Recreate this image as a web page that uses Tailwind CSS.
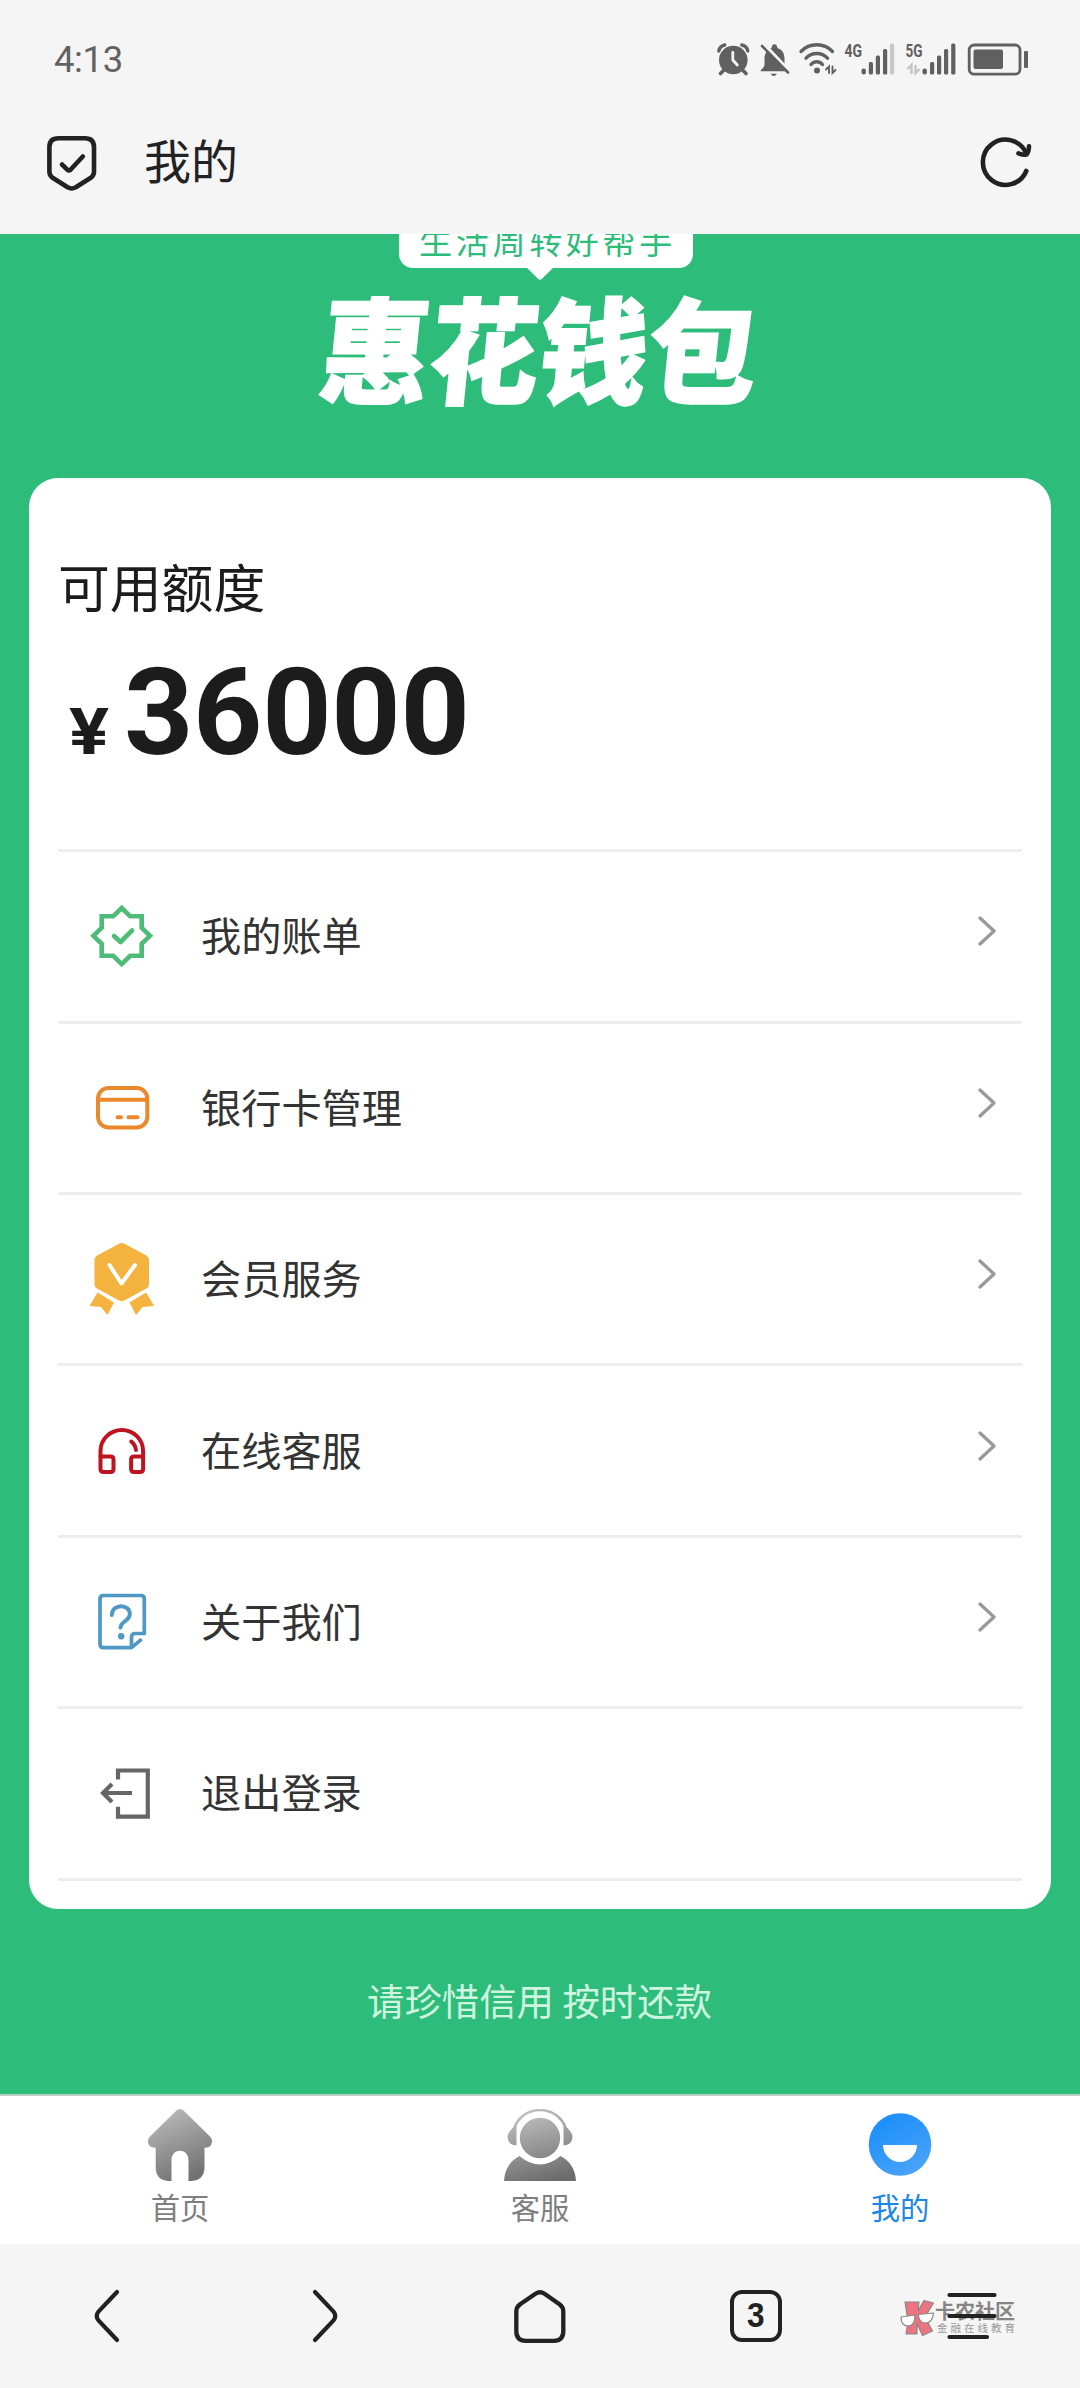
<!DOCTYPE html>
<html lang="zh-CN">
<head>
<meta charset="utf-8">
<title>我的</title>
<script src="https://cdn.jsdelivr.net/npm/@tailwindcss/browser@4"></script>
</head>
<body class="w-[1080px] h-[2388px] overflow-hidden bg-[#f5f5f5] font-['Noto_Sans_CJK_SC',sans-serif] flex flex-col">

<!-- status bar -->
<div class="h-[84px] shrink-0 flex items-start justify-between pl-[54px] pr-[52px] pt-[40px]">
  <div class="font-['Roboto',sans-serif] text-[36.500px] leading-[39px] tracking-[-0.400px] text-[#626262]">4:13</div>
  <div class="flex">
    <svg class="w-[36px] h-[40px]" viewBox="715 40 36 40" fill="none" stroke="#606060">
      <circle cx="733.3" cy="60" r="14.3" fill="#606060" stroke="none"/>
      <path d="M718.8 51q1-5 6-6M747.800 51q-1-5-6-6" stroke-width="3.4" stroke-linecap="round"/>
      <path d="M724 70l-3.500 3.500M742.500 70l3.500 3.500" stroke-width="3.600" stroke-linecap="round"/>
      <path d="M732.800 52.500v7.500l4.500 5" stroke="#f5f5f5" stroke-width="2.800" stroke-linecap="round"/>
    </svg>
    <svg class="ml-[7px] w-[34px] h-[40px]" viewBox="758 40 34 40">
      <path d="M760.500 71.300c0-2.200 4-3.300 4-7v-5.500c0-5.500 3-9.500 7-10.500.2-5.500 5.800-5.500 6 0 4.500 1 7 5 7 10.500v5.500c0 3.700 4 4.800 4 7z" fill="#606060"/>
      <path d="M770.500 73.800h6.500q-3.200 4.600-6.500 0z" fill="#606060"/>
      <path d="M765 46l25 26.500" stroke="#f5f5f5" stroke-width="4.500"/>
      <path d="M762 46l26 26.500" stroke="#606060" stroke-width="2.600" stroke-linecap="round"/>
    </svg>
    <svg class="ml-[6px] w-[40px] h-[40px]" viewBox="798 40 40 40" fill="none" stroke="#606060" stroke-width="3.300" stroke-linecap="round">
      <path d="M801 51.500c8.500-9 23-9 31.500 0M806 58.200c6-6.300 15.500-6.300 21.500 0M811 64.500c3.300-3.700 8.200-3.700 11.500 0"/>
      <circle cx="817" cy="70.600" r="3" fill="#606060" stroke="none"/>
      <path d="M826 69.500l3-3v6.500M835.500 70l-3 3v-6.500" stroke-width="1.900"/>
    </svg>
    <svg class="ml-[5px] w-[53px] h-[40px]" viewBox="843 40 53 40" fill="#606060">
      <text x="844.500" y="57" font-family="Roboto" font-weight="700" font-size="19" textLength="17.500" lengthAdjust="spacingAndGlyphs">4G</text>
      <rect x="861.500" y="68.500" width="4.400" height="6" rx="2"/><rect x="868.800" y="62" width="4.200" height="12.500" rx="1.500"/>
      <rect x="875.800" y="55.500" width="4.200" height="19" rx="1.500"/><rect x="883" y="49" width="4.200" height="25.500" rx="1.500"/>
      <rect x="890" y="43.500" width="4.200" height="31" rx="1.500" fill="#c8c8c8"/>
    </svg>
    <svg class="ml-[9px] w-[52px] h-[40px]" viewBox="905 40 52 40" fill="#606060">
      <text x="905.500" y="57" font-family="Roboto" font-weight="700" font-size="19" textLength="17" lengthAdjust="spacingAndGlyphs">5G</text>
      <path d="M907.500 69l4-4v9M919.500 69l-4 4v-8" fill="none" stroke="#c4c4c4" stroke-width="2.400"/>
      <rect x="922.500" y="68.500" width="4.400" height="6" rx="2"/><rect x="930" y="62" width="4.200" height="12.500" rx="1.500"/>
      <rect x="937" y="55.500" width="4.200" height="19" rx="1.500"/><rect x="944" y="49" width="4.200" height="25.500" rx="1.500"/>
      <rect x="951.200" y="43.500" width="4.200" height="31" rx="1.500"/>
    </svg>
    <svg class="ml-[9px] w-[62px] h-[40px]" viewBox="966 40 62 40" fill="#606060">
      <rect x="969.200" y="45" width="50.800" height="29.200" rx="5" fill="none" stroke="#606060" stroke-width="2.800"/>
      <rect x="973.500" y="49.500" width="29.500" height="19.500" rx="2"/><rect x="1024" y="51" width="4" height="17" rx="1"/>
    </svg>
  </div>
</div>

<!-- title bar -->
<header class="h-[150px] shrink-0 flex items-start pl-[44px] pr-[42px] pt-[46px]">
  <svg class="w-[56px] h-[66px]" viewBox="44 130 56 66" fill="none" stroke="#222" stroke-linecap="round" stroke-linejoin="round">
    <path d="M58.500 138.300h26.500q9 0 9 9v24.500q0 3.800-3.200 6l-15 9.500q-4.200 2.300-8.200 0l-15-9.500q-3.200-2.200-3.200-6v-24.500q0-9 9.100-9z" stroke-width="4.600"/>
    <path d="M62 164.500l5.500 5.300q1.500 1 3 0l12.300-13.300" stroke-width="4.600"/>
  </svg>
  <h1 class="ml-[44px] -mt-[5px] text-[47px] leading-[68px] text-[#222]">我的</h1>
  <svg class="ml-auto w-[60px] h-[60px]" viewBox="978 130 60 60" fill="none" stroke="#222" stroke-width="4.600" stroke-linecap="round" stroke-linejoin="round">
    <path d="M1026.300 171a22.600 22.600 0 1 1 0-17.500"/>
    <path d="M1018.500 153.300q5 1.800 8 1.300 2.200-2.500 2.500-8.300"/>
  </svg>
</header>

<!-- page content -->
<main class="h-[1860px] shrink-0 bg-[#2dbc7a] overflow-hidden flex flex-col items-center">
  <div class="relative -mt-[30px] ml-[12px] w-[294px] h-[64px] bg-white rounded-[14px] flex justify-center pt-[17px]">
    <span class="whitespace-nowrap pl-[3px] text-[33px] leading-[38px] tracking-[3.700px] text-[#2dbc7a]">生活周转好帮手</span>
    <svg class="absolute left-[127px] top-[63px] w-[28px] h-[14px]" viewBox="0 0 28 14"><path d="M0 0h28L16 11.800q-2 2-4 0z" fill="#fff"/></svg>
  </div>
  <div class="mt-[14px] h-[128px] flex items-center">
    <span class="-skew-x-6 scale-y-105 whitespace-nowrap text-[109px] leading-[128px] font-black text-white [-webkit-text-stroke:2px_white]">惠花钱包</span>
  </div>

  <section class="mt-[68px] w-[1022px] h-[1431px] shrink-0 rounded-[29px] bg-white px-[29px]">
    <div class="h-[374.300px] border-b-[3px] border-[#ededed] pt-[70px]">
      <div class="text-[51.800px] leading-[76px] text-[#1c1c1c]">可用额度</div>
      <div class="mt-[29px] flex items-baseline font-['Roboto',sans-serif] font-bold text-[#1c1c1c] leading-[120px]">
        <span class="ml-[11px] w-[55px] text-[65px]"><span class="inline-block origin-left scale-x-115">¥</span></span>
        <span class="text-[121px] tracking-[-0.300px]">36000</span>
      </div>
    </div>

    <div class="h-[171.400px] border-b-[3px] border-[#ededed] flex items-center text-[40.200px] text-[#333]">
      <svg class="ml-[24px] w-[80px] h-[80px]" viewBox="82 897 80 80" fill="none" stroke="#4fbb78" stroke-width="4.600" stroke-linecap="round">
        <path d="M121.700 909l8.500 8.300h11.500v11.500l8.300 8-8.300 8v12h-11.500l-8.500 8.300-8.500-8.300h-11.500v-12l-8.300-8 8.300-8v-11.500h11.500z"/>
        <path d="M114 937l6.500 6 11.500-11.500" stroke-linejoin="round"/>
      </svg>
      <span class="ml-[39px] mb-[4px]">我的账单</span>
      <svg class="ml-auto mr-[26px] mb-[10px] w-[18px] h-[30px]" viewBox="0 0 18 30" fill="none" stroke="#999" stroke-width="3.300"><path d="M2 2l14 13-14 13" stroke-linejoin="round" stroke-linecap="round"/></svg>
    </div>

    <div class="h-[171.400px] border-b-[3px] border-[#ededed] flex items-center text-[40.200px] text-[#333]">
      <svg class="ml-[24px] w-[80px] h-[80px]" viewBox="82 1068 80 80" fill="none" stroke="#ec872b" stroke-width="4" stroke-linecap="round">
        <rect x="98" y="1088" width="49.300" height="39.500" rx="10.500"/><path d="M98 1099.800h49.300M117.500 1117.200h3.500M128.500 1117.200h9"/>
      </svg>
      <span class="ml-[39px] mb-[4px]">银行卡管理</span>
      <svg class="ml-auto mr-[26px] mb-[10px] w-[18px] h-[30px]" viewBox="0 0 18 30" fill="none" stroke="#999" stroke-width="3.300"><path d="M2 2l14 13-14 13" stroke-linejoin="round" stroke-linecap="round"/></svg>
    </div>

    <div class="h-[171.400px] border-b-[3px] border-[#ededed] flex items-center text-[40.200px] text-[#333]">
      <svg class="ml-[24px] w-[80px] h-[80px]" viewBox="82 1239 80 80" fill="#f4b33f">
        <path d="M119 1243.700q2.700-1.500 5.400 0l22 11.800q2.600 1.500 2.600 4.500v24q0 3-2.600 4.500l-22 12q-2.700 1.500-5.400 0l-22-12q-2.500-1.500-2.500-4.500v-24q0-3 2.500-4.500z"/>
        <path d="M97.500 1292.500l16.500 10-6.500 12.500-6.500-8-11.500-1zM146 1292.500l-16.500 10 6.500 12.500 6.500-8 11.700-1z"/>
        <path d="M109.500 1265l12 18.500 13.500-18.500" fill="none" stroke="#fff" stroke-width="4" stroke-linecap="round" stroke-linejoin="round"/>
      </svg>
      <span class="ml-[39px] mb-[4px]">会员服务</span>
      <svg class="ml-auto mr-[26px] mb-[10px] w-[18px] h-[30px]" viewBox="0 0 18 30" fill="none" stroke="#999" stroke-width="3.300"><path d="M2 2l14 13-14 13" stroke-linejoin="round" stroke-linecap="round"/></svg>
    </div>

    <div class="h-[171.400px] border-b-[3px] border-[#ededed] flex items-center text-[40.200px] text-[#333]">
      <svg class="ml-[24px] w-[80px] h-[80px]" viewBox="82 1411 80 80" fill="none" stroke="#be1420" stroke-width="4" stroke-linecap="round" stroke-linejoin="round">
        <path d="M100.500 1456.500v-5.500a21.300 21 0 0 1 42.600 0v5.500"/>
        <path d="M100.500 1456.500h10q3 0 3 3v9.500q0 3-3 3h-7q-3 0-3-3zM143.100 1456.500h-9q-3 0-3 3v9.500q0 3 3 3h6q3 0 3-3z"/>
        <path d="M131.200 1441.500q3.800 2.500 4.800 8.500"/>
      </svg>
      <span class="ml-[39px] mb-[4px]">在线客服</span>
      <svg class="ml-auto mr-[26px] mb-[10px] w-[18px] h-[30px]" viewBox="0 0 18 30" fill="none" stroke="#999" stroke-width="3.300"><path d="M2 2l14 13-14 13" stroke-linejoin="round" stroke-linecap="round"/></svg>
    </div>

    <div class="h-[171.400px] border-b-[3px] border-[#ededed] flex items-center text-[40.200px] text-[#333]">
      <svg class="ml-[24px] w-[80px] h-[80px]" viewBox="82 1582 80 80" fill="none" stroke="#4f97c4" stroke-width="3.700" stroke-linecap="round" stroke-linejoin="round">
        <path d="M144.300 1633.500v-34.500q0-3.500-3.500-3.500h-37.300q-3.500 0-3.500 3.500v45q0 3.700 3.500 3.700h28l9-7.500M144.300 1633.500h-9q-3.800 0-3.800 3.800v10.300"/>
        <path d="M111.800 1615c.5-12 18.500-11.500 18-.5-.5 6.500-9 7-9.300 13" stroke-width="4"/>
        <circle cx="121.200" cy="1636.200" r="3.200" fill="#4f97c4" stroke="none"/>
      </svg>
      <span class="ml-[39px] mb-[4px]">关于我们</span>
      <svg class="ml-auto mr-[26px] mb-[10px] w-[18px] h-[30px]" viewBox="0 0 18 30" fill="none" stroke="#999" stroke-width="3.300"><path d="M2 2l14 13-14 13" stroke-linejoin="round" stroke-linecap="round"/></svg>
    </div>

    <div class="h-[171.400px] border-b-[3px] border-[#ededed] flex items-center text-[40.200px] text-[#333]">
      <svg class="ml-[24px] w-[80px] h-[80px]" viewBox="82 1753 80 80" fill="none" stroke="#666" stroke-width="4.200">
        <path d="M118 1779.500v-9h29.800v46.200H118v-10"/><path d="M132 1793h-29M112 1784l-9 9 9 9"/>
      </svg>
      <span class="ml-[39px] mb-[4px]">退出登录</span>
    </div>
  </section>

  <p class="mt-[64px] -ml-[1px] text-[37.400px] leading-[54px] text-[#cff5e0] whitespace-nowrap">请珍惜信用 按时还款</p>
</main>

<!-- tab bar -->
<nav class="h-[150px] shrink-0 bg-white border-t-2 border-[#b9cfc4] grid grid-cols-3 text-[29.300px] leading-[40px] text-[#7d7e80] pt-[13px]">
  <div class="flex flex-col items-center">
    <svg class="w-[72px] h-[72px]" viewBox="0 0 72 72">
      <defs><linearGradient id="g" x1=".2" y1="0" x2=".6" y2="1"><stop offset="0" stop-color="#bcbcbc"/><stop offset="1" stop-color="#707070"/></linearGradient></defs>
      <path d="M32.500 1.500q3.500-3 7 0l27 26.500q3 4 .5 8-1.500 2.700-6.500 2.700V60q-1 11-12.500 12h-3.500V51c0-12.500-17-12.500-17 0v21h-3.500Q12.500 71 11.700 60V38.700q-5 0-6.700-2.700-2.500-4 .5-8z" fill="url(#g)"/>
    </svg>
    <span class="mt-[5px]">首页</span>
  </div>
  <div class="flex flex-col items-center">
    <svg class="w-[72px] h-[72px]" viewBox="0 0 72 72">
      <defs><linearGradient id="b" gradientUnits="userSpaceOnUse" x1="25" y1="0" x2="45" y2="72"><stop offset="0" stop-color="#c2c2c2"/><stop offset="1" stop-color="#6c6c6c"/></linearGradient></defs>
      <circle cx="36" cy="29" r="20.200" fill="url(#b)"/>
      <path d="M0 72q1-17.500 15.500-25 20.500 17 41 0Q71 54.500 72 72z" fill="url(#b)"/>
      <path d="M10 20C18-5.300 54-5.300 62 20" fill="none" stroke="url(#b)" stroke-width="2.600"/>
      <path d="M12.500 17.500v19Q3.500 36 3.500 27.500q0-3 5-8.500zM59.500 17.500v19q9-.5 9-9 0-3-5-8.500z" fill="url(#b)"/>
    </svg>
    <span class="mt-[5px]">客服</span>
  </div>
  <div class="flex flex-col items-center text-[#1a86e6]">
    <svg class="w-[72px] h-[72px]" viewBox="0 0 72 72">
      <defs><linearGradient id="u" x1="0" y1="0" x2=".6" y2="1"><stop offset="0" stop-color="#148bfb"/><stop offset="1" stop-color="#48a2fa"/></linearGradient></defs>
      <circle cx="36" cy="35.500" r="31.300" fill="url(#u)"/><path d="M19 36h34a17 17 0 0 1-34 0z" fill="#fff"/>
    </svg>
    <span class="mt-[5px]">我的</span>
  </div>
</nav>

<!-- browser toolbar -->
<footer class="h-[144px] shrink-0 bg-[#f5f5f5] grid grid-cols-5 justify-items-center pt-[42px]">
  <svg class="w-[60px] h-[60px]" viewBox="78 2286 60 60" fill="none" stroke="#222" stroke-width="4.200" stroke-linecap="round"><path d="M117 2292l-18.500 19.500q-3.500 4.500 0 9l18.500 19.500"/></svg>
  <svg class="w-[60px] h-[60px]" viewBox="294 2286 60 60" fill="none" stroke="#222" stroke-width="4.200" stroke-linecap="round"><path d="M315 2292l18.500 19.500q3.500 4.500 0 9l-18.500 19.500"/></svg>
  <svg class="w-[60px] h-[60px]" viewBox="510 2286 60 60" fill="none" stroke="#222" stroke-width="4.300" stroke-linejoin="round"><path d="M535.500 2293.800q4.500-3 9 0l15 10.500q3.800 2.800 3.800 7.500v19.500q0 9.500-9.500 9.500h-28q-9.500 0-9.500-9.500v-19.500q0-4.700 3.800-7.500z"/></svg>
  <div class="mt-[4px] w-[52px] h-[52px] rounded-[12px] border-[4px] border-[#222] flex items-center justify-center font-['Liberation_Sans',sans-serif] font-bold text-[35px] leading-none text-[#222]"><span class="-mt-[3px] scale-x-90">3</span></div>
  <div class="relative w-[60px] h-[60px]">
    <!-- watermark laid over the menu icon -->
    <svg class="absolute -left-[44px] top-[8px] w-[40px] h-[44px]" viewBox="898 2294 40 44" stroke="#888" stroke-width="1.200" stroke-linejoin="round">
      <path d="M905 2302h14l-1 9 6-10.500 9.500 2.500-8.500 14 7.500 14-10 4.500-5.500-12v10.500h-11l2-13z" fill="#ee7481"/>
      <path d="M901 2317l14-2q0 11-7 11t-7-9zM918.500 2314.500l15-1.500q-1 10-8 10t-7-8.500z" fill="#fff"/>
    </svg>
    <div class="absolute -left-[7px] top-[13px] whitespace-nowrap text-[20px] leading-[24px] font-bold text-[#858585]">卡农社区</div>
    <div class="absolute -left-[5px] top-[34px] whitespace-nowrap text-[10.500px] leading-[16px] tracking-[3px] text-[#999]">金融在线教育</div>
    <svg class="absolute left-0 top-0 w-[60px] h-[60px]" viewBox="942 2286 60 60" stroke="#222" stroke-width="4.200" stroke-linecap="round"><path d="M949.500 2295h45M949.500 2316h45M949.500 2337h37.500"/></svg>
  </div>
</footer>
</body>
</html>
